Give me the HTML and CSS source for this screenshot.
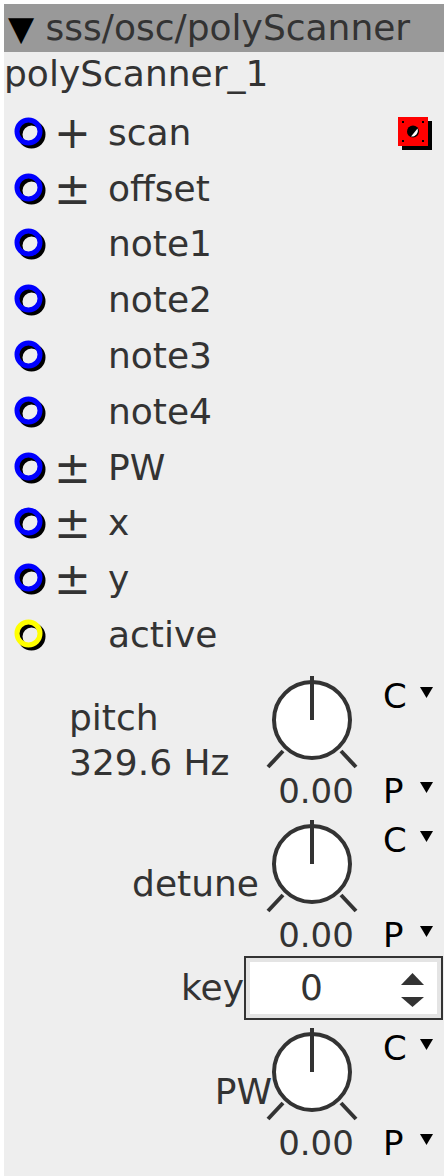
FILE: index.html
```html
<!DOCTYPE html>
<html lang="en">
<head>
    <meta charset="UTF-8">
    <meta name="viewport" content="width=device-width, initial-scale=1.0">
    <title>sss/osc/polyScanner</title>
    <link rel="stylesheet" href="styles.css">
</head>
<body>
    <div class="panel">
        <div class="header"><span class="caret">&#9660;</span> sss/osc/polyScanner</div>
        <div class="title">polyScanner_1</div>

        <div class="ports">
            <div class="port">
                <svg class="ring" width="40" height="40" viewBox="0 0 40 40"><circle cx="21.5" cy="21.5" r="11.5" fill="none" stroke="#000" stroke-width="5"/><circle cx="18.5" cy="18.5" r="11.5" fill="none" stroke="#00f" stroke-width="5"/></svg>
                <span class="sign">+</span>
                <span class="port-name">scan</span>
                <svg class="scope" width="36" height="36" viewBox="0 0 36 36">
                    <rect x="4" y="6" width="30" height="29" fill="#000"/>
                    <rect x="0" y="2" width="30" height="29" fill="#f00"/>
                    <rect x="4" y="6" width="2" height="2" fill="#000"/>
                    <rect x="24" y="6" width="2" height="2" fill="#000"/>
                    <rect x="4" y="25" width="2" height="2" fill="#000"/>
                    <rect x="24" y="25" width="2" height="2" fill="#000"/>
                    <circle cx="15" cy="16.5" r="6" fill="#000"/>
                    <path d="M19.5 13.5 A6 6 0 0 1 13 21.5 Z" fill="#fff"/>
                </svg>
            </div>
            <div class="port">
                <svg class="ring" width="40" height="40" viewBox="0 0 40 40"><circle cx="21.5" cy="21.5" r="11.5" fill="none" stroke="#000" stroke-width="5"/><circle cx="18.5" cy="18.5" r="11.5" fill="none" stroke="#00f" stroke-width="5"/></svg>
                <span class="sign">&plusmn;</span>
                <span class="port-name">offset</span>
            </div>
            <div class="port">
                <svg class="ring" width="40" height="40" viewBox="0 0 40 40"><circle cx="21.5" cy="21.5" r="11.5" fill="none" stroke="#000" stroke-width="5"/><circle cx="18.5" cy="18.5" r="11.5" fill="none" stroke="#00f" stroke-width="5"/></svg>
                <span class="sign"></span>
                <span class="port-name">note1</span>
            </div>
            <div class="port">
                <svg class="ring" width="40" height="40" viewBox="0 0 40 40"><circle cx="21.5" cy="21.5" r="11.5" fill="none" stroke="#000" stroke-width="5"/><circle cx="18.5" cy="18.5" r="11.5" fill="none" stroke="#00f" stroke-width="5"/></svg>
                <span class="sign"></span>
                <span class="port-name">note2</span>
            </div>
            <div class="port">
                <svg class="ring" width="40" height="40" viewBox="0 0 40 40"><circle cx="21.5" cy="21.5" r="11.5" fill="none" stroke="#000" stroke-width="5"/><circle cx="18.5" cy="18.5" r="11.5" fill="none" stroke="#00f" stroke-width="5"/></svg>
                <span class="sign"></span>
                <span class="port-name">note3</span>
            </div>
            <div class="port">
                <svg class="ring" width="40" height="40" viewBox="0 0 40 40"><circle cx="21.5" cy="21.5" r="11.5" fill="none" stroke="#000" stroke-width="5"/><circle cx="18.5" cy="18.5" r="11.5" fill="none" stroke="#00f" stroke-width="5"/></svg>
                <span class="sign"></span>
                <span class="port-name">note4</span>
            </div>
            <div class="port">
                <svg class="ring" width="40" height="40" viewBox="0 0 40 40"><circle cx="21.5" cy="21.5" r="11.5" fill="none" stroke="#000" stroke-width="5"/><circle cx="18.5" cy="18.5" r="11.5" fill="none" stroke="#00f" stroke-width="5"/></svg>
                <span class="sign">&plusmn;</span>
                <span class="port-name">PW</span>
            </div>
            <div class="port">
                <svg class="ring" width="40" height="40" viewBox="0 0 40 40"><circle cx="21.5" cy="21.5" r="11.5" fill="none" stroke="#000" stroke-width="5"/><circle cx="18.5" cy="18.5" r="11.5" fill="none" stroke="#00f" stroke-width="5"/></svg>
                <span class="sign">&plusmn;</span>
                <span class="port-name">x</span>
            </div>
            <div class="port">
                <svg class="ring" width="40" height="40" viewBox="0 0 40 40"><circle cx="21.5" cy="21.5" r="11.5" fill="none" stroke="#000" stroke-width="5"/><circle cx="18.5" cy="18.5" r="11.5" fill="none" stroke="#00f" stroke-width="5"/></svg>
                <span class="sign">&plusmn;</span>
                <span class="port-name">y</span>
            </div>
            <div class="port">
                <svg class="ring" width="40" height="40" viewBox="0 0 40 40"><circle cx="21.5" cy="21.5" r="11.5" fill="none" stroke="#000" stroke-width="5"/><circle cx="18.5" cy="18.5" r="11.5" fill="none" stroke="#ff0" stroke-width="5"/></svg>
                <span class="sign"></span>
                <span class="port-name">active</span>
            </div>
        </div>

        <div class="knob-block">
            <div class="knob-label left">pitch<br>329.6 Hz</div>
            <div class="knob-col">
                <svg class="knob" width="92" height="95" viewBox="0 0 92 95">
                    <circle cx="46" cy="44" r="38" fill="#fff" stroke="#333" stroke-width="4"/>
                    <line x1="46" y1="0" x2="46" y2="44" stroke="#333" stroke-width="4"/>
                    <line x1="2" y1="91" x2="17" y2="75" stroke="#333" stroke-width="4"/>
                    <line x1="75" y1="75" x2="90" y2="91" stroke="#333" stroke-width="4"/>
                </svg>
                <div class="knob-value">0.00</div>
            </div>
            <div class="knob-menu">
                <div class="menu-item"><span>C</span><svg width="13" height="11" viewBox="0 0 13 11"><polygon points="0,0 13,0 6.5,11" fill="#000"/></svg></div>
                <div class="menu-item"><span>P</span><svg width="13" height="11" viewBox="0 0 13 11"><polygon points="0,0 13,0 6.5,11" fill="#000"/></svg></div>
            </div>
        </div>

        <div class="knob-block">
            <div class="knob-label">detune</div>
            <div class="knob-col">
                <svg class="knob" width="92" height="95" viewBox="0 0 92 95">
                    <circle cx="46" cy="44" r="38" fill="#fff" stroke="#333" stroke-width="4"/>
                    <line x1="46" y1="0" x2="46" y2="44" stroke="#333" stroke-width="4"/>
                    <line x1="2" y1="91" x2="17" y2="75" stroke="#333" stroke-width="4"/>
                    <line x1="75" y1="75" x2="90" y2="91" stroke="#333" stroke-width="4"/>
                </svg>
                <div class="knob-value">0.00</div>
            </div>
            <div class="knob-menu">
                <div class="menu-item"><span>C</span><svg width="13" height="11" viewBox="0 0 13 11"><polygon points="0,0 13,0 6.5,11" fill="#000"/></svg></div>
                <div class="menu-item"><span>P</span><svg width="13" height="11" viewBox="0 0 13 11"><polygon points="0,0 13,0 6.5,11" fill="#000"/></svg></div>
            </div>
        </div>

        <div class="key-row">
            <div class="key-label">key</div>
            <div class="spin-box">
                <span class="spin-value">0</span>
                <svg class="spin-arrows" width="24" height="40" viewBox="0 0 24 40">
                    <polygon points="0,17 11.5,5 23,17" fill="#333"/>
                    <polygon points="0,29 23,29 11.5,39" fill="#333"/>
                </svg>
            </div>
        </div>

        <div class="knob-block">
            <div class="knob-label"><span class="tuck">PW</span></div>
            <div class="knob-col">
                <svg class="knob" width="92" height="95" viewBox="0 0 92 95">
                    <circle cx="46" cy="44" r="38" fill="#fff" stroke="#333" stroke-width="4"/>
                    <line x1="46" y1="0" x2="46" y2="44" stroke="#333" stroke-width="4"/>
                    <line x1="2" y1="91" x2="17" y2="75" stroke="#333" stroke-width="4"/>
                    <line x1="75" y1="75" x2="90" y2="91" stroke="#333" stroke-width="4"/>
                </svg>
                <div class="knob-value">0.00</div>
            </div>
            <div class="knob-menu">
                <div class="menu-item"><span>C</span><svg width="13" height="11" viewBox="0 0 13 11"><polygon points="0,0 13,0 6.5,11" fill="#000"/></svg></div>
                <div class="menu-item"><span>P</span><svg width="13" height="11" viewBox="0 0 13 11"><polygon points="0,0 13,0 6.5,11" fill="#000"/></svg></div>
            </div>
        </div>
    </div>
</body>
</html>
```

FILE: styles.css
```css
body {
    margin: 0;
    background: #fff;
    font-family: "DejaVu Sans", sans-serif;
}
.panel {
    margin: 4px 4px 0;
    min-height: 1172px;
    background: #eee;
    color: #333;
    font-size: 36px;
    overflow: hidden;
}
.header {
    height: 48px;
    line-height: 48px;
    padding-left: 4px;
    background: #999;
    white-space: nowrap;
    overflow: hidden;
}
.caret {
    color: #000;
    font-size: 34px;
}
.title {
    padding-top: 2px;
    line-height: 40px;
}
.ports {
    margin-top: 11px;
    margin-bottom: 9px;
}
.port {
    display: flex;
    align-items: center;
    height: 55.8px;
    line-height: 40px;
}
.ring {
    flex: 0 0 40px;
    margin-left: 6px;
}
.sign {
    flex: 0 0 54px;
    padding-left: 4px;
    font-size: 44px;
}
.port-name {
    white-space: nowrap;
}
.scope {
    margin-left: auto;
    margin-right: 10px;
}
.knob-block {
    display: flex;
    align-items: center;
    height: 144px;
    box-sizing: border-box;
    padding: 4px 0 5px;
}
.knob-label {
    flex: 0 0 262px;
    box-sizing: border-box;
    margin-bottom: 7px;
    padding-right: 7px;
    line-height: 40px;
    text-align: right;
    white-space: nowrap;
}
.knob-label.left {
    padding-left: 65px;
    line-height: 45px;
    text-align: left;
}
.tuck {
    margin-right: -13px;
}
.knob-col {
    flex: 0 0 92px;
    display: flex;
    flex-direction: column;
}
.knob {
    display: block;
}
.knob-value {
    padding-left: 8px;
    font-size: 34px;
    line-height: 40px;
    text-align: center;
}
.knob-menu {
    flex: 1;
    align-self: stretch;
    display: flex;
    flex-direction: column;
    justify-content: space-between;
    padding-left: 25px;
    color: #000;
    font-size: 34px;
}
.menu-item {
    display: flex;
    align-items: flex-start;
    line-height: 40px;
}
.menu-item span {
    flex: 0 0 37px;
}
.menu-item svg {
    margin-top: 11px;
}
.key-row {
    display: flex;
    align-items: center;
    height: 64px;
    margin: -4px 0 4px;
}
.key-label {
    flex: 0 0 240px;
    line-height: 40px;
    text-align: right;
}
.spin-box {
    flex: 0 0 199px;
    height: 64px;
    box-sizing: border-box;
    display: flex;
    align-items: center;
    border: 2px solid #333;
    box-shadow: inset 0 0 0 4px #e4e4e4;
    background: #fff;
}
.spin-value {
    padding-left: 54px;
    line-height: 40px;
}
.spin-arrows {
    margin-left: auto;
    margin-right: 16px;
}
```
